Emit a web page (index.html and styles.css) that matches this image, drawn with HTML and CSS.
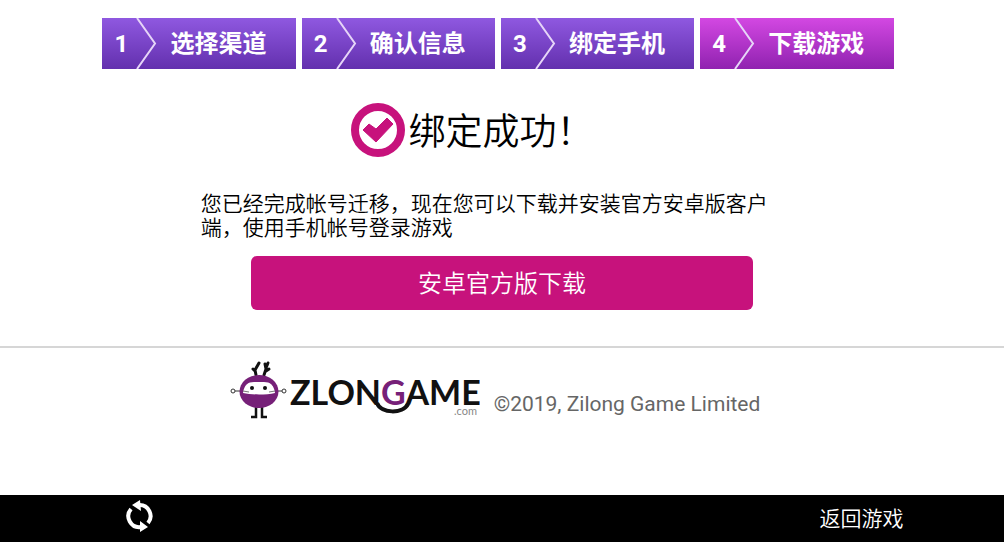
FILE: index.html
```html
<!doctype html>
<html lang="zh-CN">
  <head>
    <meta charset="UTF-8" />
    <meta name="viewport" content="width=device-width, initial-scale=1.0" />
    <title>绑定成功</title>
    <link rel="stylesheet" href="styles.css">
  </head>
  <body>
    <ol class="steps">
      <li class="step">
        <span class="step-num">1</span>
        <svg class="step-arrow" viewBox="0 0 22 51" aria-hidden="true"><path d="M1 0 L19 25.500 L1 51" /></svg>
        <span class="step-name">选择渠道</span>
      </li>
      <li class="step">
        <span class="step-num">2</span>
        <svg class="step-arrow" viewBox="0 0 22 51" aria-hidden="true"><path d="M1 0 L19 25.500 L1 51" /></svg>
        <span class="step-name">确认信息</span>
      </li>
      <li class="step">
        <span class="step-num">3</span>
        <svg class="step-arrow" viewBox="0 0 22 51" aria-hidden="true"><path d="M1 0 L19 25.500 L1 51" /></svg>
        <span class="step-name">绑定手机</span>
      </li>
      <li class="step step-active" aria-current="step">
        <span class="step-num">4</span>
        <svg class="step-arrow" viewBox="0 0 22 51" aria-hidden="true"><path d="M1 0 L19 25.500 L1 51" /></svg>
        <span class="step-name">下载游戏</span>
      </li>
    </ol>

    <main>
      <h1 class="result">
        <svg class="result-icon" viewBox="0 0 56 56" aria-hidden="true">
          <circle cx="27" cy="28" r="23" fill="#fff" stroke="#c7127c" stroke-width="8" />
          <path d="M12 28 L18 22 L25 27 L36 16 L42 22 L25 40 Z" fill="#c7127c" stroke="#c7127c" stroke-width="1" stroke-linejoin="round" />
        </svg>
        <span class="result-text">绑定成功！</span>
      </h1>
      <p class="message">您已经完成帐号迁移，现在您可以下载并安装官方安卓版客户端，使用手机帐号登录游戏</p>
      <a class="download" href="#">安卓官方版下载</a>
    </main>

    <footer class="footer">
      <svg class="logo" viewBox="0 0 250 60" role="img" aria-label="ZLONGAME.com">
        <!-- antlers -->
        <g fill="none" stroke="#111" stroke-width="3" stroke-linecap="round">
          <path d="M26 15 L25 10 L29 3 M25 11 L23 9" />
          <path d="M34 15 L36 9 L35 4 M36 11 L39 9 M36 8 L38 3" />
        </g>
        <!-- arms and legs -->
        <g fill="none" stroke="#333" stroke-width="1">
          <path d="M5 31 H14 M44 31 H52" />
          <circle cx="3" cy="31" r="2" />
          <circle cx="54" cy="31" r="2" />
        </g>
        <path d="M26 46 V57 H21 M32 46 V57 H37" fill="none" stroke="#111" stroke-width="2.500" />
        <!-- body -->
        <ellipse cx="29" cy="31.500" rx="19.500" ry="16.500" fill="#762078" />
        <path d="M13 33 C14 25 18 22 24 22 H34 C40 22 44 25 45 33 C36 35 22 35 13 33 Z" fill="#fff" />
        <circle cx="22" cy="28" r="2" fill="#111" />
        <circle cx="35" cy="28" r="2" fill="#111" />
        <path d="M13 31 L19 32 M45 31 L39 32" stroke="#777" stroke-width="1" />
        <text class="logo-name" x="60" y="45">ZLON<tspan class="logo-g">G</tspan>AME</text>
        <path d="M147 43 C151 54 173 54 178 44" fill="none" stroke="#111" stroke-width="4" />
        <text class="logo-domain" x="224" y="55">.com</text>
      </svg>
      <span class="copyright">©2019, Zilong Game Limited</span>
    </footer>

    <nav class="toolbar">
      <button class="refresh" type="button" aria-label="刷新">
        <svg viewBox="0 0 28 34" aria-hidden="true">
          <path d="M13 5 A11 11 0 0 1 22 23 M15 27 A11 11 0 0 1 5 9" fill="none" stroke="#fff" stroke-width="4" />
          <path d="M14 0 L6 5 L15 11 Z M14 21 L22 27 L14 32 Z" fill="#fff" />
        </svg>
      </button>
      <a class="back" href="#">返回游戏</a>
    </nav>
  </body>
</html>
```
FILE: styles.css
```css
* {
  box-sizing: border-box;
}
body {
  margin: 0;
  min-height: 100vh;
  background-color: #fff;
  color: #000;
  font-family: Roboto, "Noto Sans CJK SC", sans-serif;
  font-weight: 350;
  font-size: 21px;
  line-height: 24px;
}

/* step bar */
.steps {
  display: grid;
  grid-template-columns: repeat(4, 1fr);
  gap: 6px;
  margin: 0;
  padding: 18px 11% 0 calc(10% + 2px);
  list-style: none;
}
.step {
  display: flex;
  align-items: center;
  height: 51px;
  background: linear-gradient(#8f58e0, #6330ae);
  color: #fff;
  font-size: 24px;
  font-weight: 700;
}
.step-active {
  background: linear-gradient(#d348e2, #9022b0);
}
.step-num {
  width: 34px;
  padding-left: 12px;
}
.step-arrow {
  width: 22px;
  height: 51px;
  margin-right: 12px;
  fill: none;
  stroke: #e6d5f8;
  stroke-width: 2;
}

/* result */
.result {
  display: flex;
  align-items: center;
  gap: 1px;
  margin: 30px 0 0 35%;
  font-size: 37px;
  font-weight: 350;
  line-height: 56px;
}
.result-icon {
  width: 56px;
  height: 56px;
}
.result-text {
  padding-top: 6px;
}
.message {
  width: 60%;
  margin: 31px auto 16px;
}
.download {
  display: block;
  width: 50%;
  margin: 0 auto;
  padding-top: 2px;
  border-radius: 6px;
  background-color: #c7127c;
  color: #fff;
  font-size: 24px;
  line-height: 52px;
  text-align: center;
  text-decoration: none;
}

/* footer */
.footer {
  display: flex;
  justify-content: center;
  align-items: flex-end;
  gap: 14px;
  margin-top: 36px;
  padding: 12px 14px 0 0;
  border-top: 2px solid #d6d6d6;
  color: #666;
  font-weight: 400;
}
.logo {
  width: 250px;
  height: 60px;
}
.logo-name {
  fill: #111;
  font-family: Lato, sans-serif;
  font-size: 34px;
  font-weight: 700;
}
.logo-g {
  fill: #762078;
}
.logo-domain {
  fill: #888;
  font-family: Lato, sans-serif;
  font-size: 11px;
}
.copyright {
  padding-bottom: 4px;
}

/* bottom toolbar */
.toolbar {
  position: fixed;
  right: 0;
  bottom: 0;
  left: 0;
  display: flex;
  justify-content: space-between;
  align-items: center;
  height: 47px;
  padding: 0 10% 0 calc(12% + 6px);
  background-color: #000;
}
.refresh {
  padding: 0 0 4px;
  border: 0;
  background: none;
  cursor: pointer;
}
.refresh svg {
  display: block;
  width: 28px;
  height: 34px;
}
.back {
  color: #fff;
  text-decoration: none;
}
```
